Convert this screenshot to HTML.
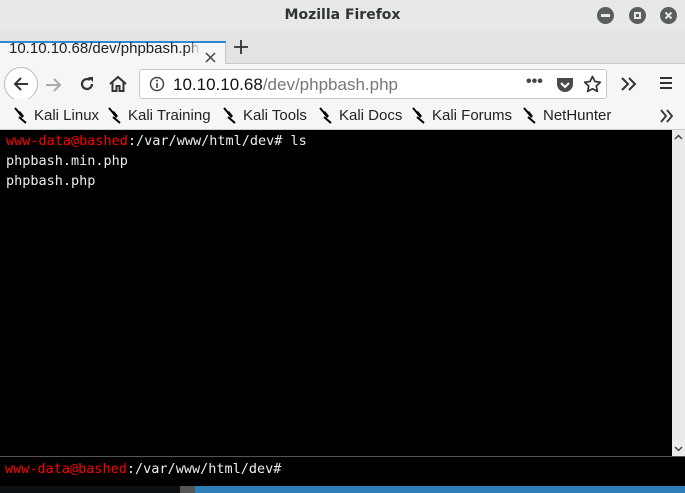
<!DOCTYPE html>
<html><head><style>
*{margin:0;padding:0;box-sizing:border-box}
body{width:685px;height:493px;overflow:hidden;background:#dcdcdc;font-family:"Liberation Sans","DejaVu Sans",sans-serif;position:relative}
.abs{position:absolute}
.title{left:0;top:0;width:685px;height:31px;background:#e8e8e7;text-align:center;font:bold 14px "DejaVu Sans",sans-serif;color:#2e3436;line-height:31px}
.wb{top:7px;width:17px;height:17px;border-radius:50%;background:#5a5e60}
.wb i{position:absolute;background:#e8e8e7}
.tabbar{left:0;top:31px;width:685px;height:33px;background:#e3e3e3;border-bottom:1px solid #c8c8c8}
.tab{left:0;top:39px;width:200px;height:25px;font:15px "Liberation Sans",sans-serif;color:#222;padding:0 0 0 9px;white-space:nowrap;overflow:hidden}
.nav{left:0;top:64px;width:685px;height:35px;background:#f5f6f7}
.url{left:139px;top:69px;width:468px;height:30px;background:#fff;border:1px solid #c7c7c7;border-radius:3px;font:17px "Liberation Sans",sans-serif;color:#111;padding:5px 0 0 33px}
.bm{left:0;top:99px;width:685px;height:31px;background:#f5f6f7;border-bottom:1px solid #ccc;font:15px "Liberation Sans",sans-serif;color:#222;white-space:nowrap}
.bm span{position:absolute;top:8px}
.bm svg{position:absolute;top:8px}
.term{left:0;top:130px;width:672px;height:326px;background:#000;font:13.5px "DejaVu Sans Mono",monospace;color:#eee;padding:1px 0 0 6px;line-height:20px}
.sb{left:672px;top:130px;width:13px;height:326px;background:#ebebeb;color:#555;font-size:10px;text-align:center}
.inp{left:0;top:456px;width:685px;height:30px;background:#000;border-top:1px solid #555;font:13.5px "DejaVu Sans Mono",monospace;color:#eee;padding:4px 0 0 5px}
.r{color:#f00}
.desk{left:0;top:486px;width:685px;height:7px;background:#0b1015}
</style></head><body>
<div class="abs title">Mozilla Firefox</div>
<div class="abs wb" style="left:597px"><i style="left:4px;top:7px;width:9px;height:3px"></i></div>
<div class="abs wb" style="left:629px"><i style="left:5px;top:5px;width:7px;height:7px;background:none;border:2px solid #e8e8e7"></i></div>
<div class="abs wb" style="left:660px"><svg width="17" height="17" style="position:absolute;left:0;top:0"><path d="M5.5 5.5l6 6M11.5 5.5l-6 6" stroke="#e8e8e7" stroke-width="2"/></svg></div>
<div class="abs tabbar"></div>
<div class="abs" style="left:0;top:41px;width:226px;height:2px;background:#2a8ad4"></div>
<div class="abs" style="left:0;top:43px;width:226px;height:22px;background:#f5f6f7;border-right:1px solid #c8c8c8"></div>
<div class="abs tab" style="top:39px;padding-top:1px">10.10.10.68/dev/phpbash.php</div>
<div class="abs" style="left:188px;top:43px;width:12px;height:20px;background:linear-gradient(90deg,rgba(245,246,247,0),#f5f6f7)"></div>
<svg class="abs" style="left:205px;top:52px" width="11" height="11"><path d="M1 1l9 9M10 1l-9 9" stroke="#444" stroke-width="1.5"/></svg>
<svg class="abs" style="left:233px;top:39px" width="16" height="16"><path d="M8 1v14M1 8h14" stroke="#333" stroke-width="1.8"/></svg>
<div class="abs nav"></div>
<div class="abs" style="left:4px;top:67px;width:34px;height:34px;border-radius:50%;border:1px solid #bbb;background:#fff"></div>
<svg class="abs" style="left:11px;top:74px" width="20" height="20"><path d="M17 10H4M10 4l-6 6 6 6" stroke="#333" stroke-width="2" fill="none"/></svg>
<svg class="abs" style="left:44px;top:75px" width="20" height="20"><path d="M2 10h14M10 4l6 6-6 6" stroke="#aaa" stroke-width="2" fill="none"/></svg>
<svg class="abs" style="left:78px;top:75px" width="18" height="18"><path d="M14 9a5 5 0 1 1-2-4" stroke="#333" stroke-width="2.2" fill="none"/><path d="M10 2h5v5z" fill="#333"/></svg>
<svg class="abs" style="left:108px;top:74px" width="20" height="20"><path d="M2 10l8-7 8 7M4.5 8v9h4v-5h3v5h4V8" stroke="#333" stroke-width="2" fill="none"/></svg>
<div class="abs url"><svg style="position:absolute;left:9px;top:6px" width="16" height="16"><circle cx="8" cy="8" r="6.5" stroke="#444" stroke-width="1.5" fill="none"/><path d="M8 7v5" stroke="#444" stroke-width="1.6"/><circle cx="8" cy="4.6" r="1" fill="#444"/></svg>10.10.10.68<span style="color:#777">/dev/phpbash.php</span>
<span style="position:absolute;left:386px;top:3px;font-weight:bold;color:#444;font-size:16px">•••</span>
<svg style="position:absolute;left:416px;top:6px" width="18" height="17"><path d="M1 2h16v6a8 8 0 0 1-16 0z" fill="#4a4a4a"/><path d="M5 7l4 4 4-4" stroke="#fff" stroke-width="2" fill="none"/></svg>
<svg style="position:absolute;left:443px;top:5px" width="19" height="19"><path d="M9.5 1.5l2.4 5 5.4.7-4 3.8 1 5.4-4.8-2.6-4.8 2.6 1-5.4-4-3.8 5.4-.7z" stroke="#333" stroke-width="1.7" fill="none" stroke-linejoin="round"/></svg></div>
<svg class="abs" style="left:620px;top:76px" width="18" height="16"><path d="M2 2l6 6-6 6M9 2l6 6-6 6" stroke="#333" stroke-width="2" fill="none"/></svg>
<svg class="abs" style="left:659px;top:76px" width="14" height="14"><path d="M1 2h12M1 7h12M1 12h12" stroke="#333" stroke-width="2"/></svg>
<div class="abs bm">
<svg style="left:13px" width="16" height="17"><path d="M2 1l6 7M6 10l7 6" stroke="#000" stroke-width="2"/><path d="M5 6l4 5 2-2-4-5z" fill="#000"/></svg><span style="left:34px">Kali Linux</span>
<svg style="left:107px" width="16" height="17"><path d="M2 1l6 7M6 10l7 6" stroke="#000" stroke-width="2"/><path d="M5 6l4 5 2-2-4-5z" fill="#000"/></svg><span style="left:128px">Kali Training</span>
<svg style="left:222px" width="16" height="17"><path d="M2 1l6 7M6 10l7 6" stroke="#000" stroke-width="2"/><path d="M5 6l4 5 2-2-4-5z" fill="#000"/></svg><span style="left:243px">Kali Tools</span>
<svg style="left:318px" width="16" height="17"><path d="M2 1l6 7M6 10l7 6" stroke="#000" stroke-width="2"/><path d="M5 6l4 5 2-2-4-5z" fill="#000"/></svg><span style="left:339px">Kali Docs</span>
<svg style="left:411px" width="16" height="17"><path d="M2 1l6 7M6 10l7 6" stroke="#000" stroke-width="2"/><path d="M5 6l4 5 2-2-4-5z" fill="#000"/></svg><span style="left:432px">Kali Forums</span>
<svg style="left:522px" width="16" height="17"><path d="M2 1l6 7M6 10l7 6" stroke="#000" stroke-width="2"/><path d="M5 6l4 5 2-2-4-5z" fill="#000"/></svg><span style="left:543px">NetHunter</span>
<svg style="left:659px;top:10px" width="16" height="14"><path d="M2 1l5 6-5 6M8 1l5 6-5 6" stroke="#333" stroke-width="1.8" fill="none"/></svg>
</div>
<div class="abs term"><span class="r">www-data@bashed</span>:/var/www/html/dev# ls<br>phpbash.min.php<br>phpbash.php</div>
<div class="abs sb"><svg style="position:absolute;left:2px;top:4px" width="9" height="6"><path d="M1 5l3.5-3.5L8 5" stroke="#444" stroke-width="1.5" fill="none"/></svg><svg style="position:absolute;left:2px;bottom:4px" width="9" height="6"><path d="M1 1l3.5 3.5L8 1" stroke="#444" stroke-width="1.5" fill="none"/></svg></div>
<div class="abs inp"><span class="r">www-data@bashed</span>:/var/www/html/dev#</div>
<div class="abs desk"><div style="position:absolute;left:180px;width:15px;height:7px;background:#555"></div><div style="position:absolute;left:195px;width:490px;height:7px;background:#2b7fb6"></div></div>
</body></html>
